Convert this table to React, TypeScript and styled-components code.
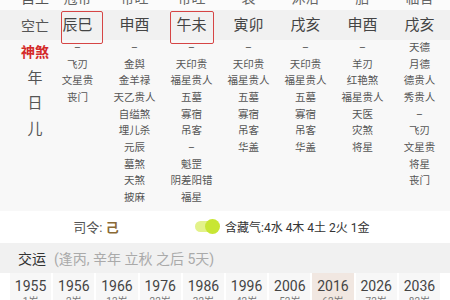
import React from 'react';
import styled, { createGlobalStyle } from 'styled-components';

const GlobalStyle = createGlobalStyle`
  html, body {
    margin: 0;
    padding: 0;
    background: #f8f8f8;
    overflow: hidden;
  }
  body {
    font-family: Roboto, "Noto Sans CJK SC", sans-serif;
    color: #555;
  }
`;

interface Pillar {
  name: string;
  top: string;
  boxed?: { left: number; width: number };
  stars: string[];
}

const pillars: Pillar[] = [
  { name: '辰巳', top: '冠带', boxed: { left: -17, width: 42 }, stars: ['–', '飞刃', '文星贵', '丧门'] },
  {
    name: '申酉',
    top: '帝旺',
    stars: ['–', '金舆', '金羊禄', '天乙贵人', '自缢煞', '埋儿杀', '元辰', '墓煞', '天煞', '披麻'],
  },
  {
    name: '午未',
    top: '帝旺',
    boxed: { left: -22, width: 44 },
    stars: ['–', '天印贵', '福星贵人', '五墓', '寡宿', '吊客', '–', '魁罡', '阴差阳错', '福星'],
  },
  { name: '寅卯', top: '衰', stars: ['–', '天印贵', '福星贵人', '五墓', '寡宿', '吊客', '华盖'] },
  { name: '戌亥', top: '沐浴', stars: ['–', '天印贵', '福星贵人', '五墓', '寡宿', '吊客', '华盖'] },
  { name: '申酉', top: '胎', stars: ['–', '羊刃', '红艳煞', '福星贵人', '天医', '灾煞', '将星'] },
  { name: '戌亥', top: '临官', stars: ['天德', '月德', '德贵人', '秀贵人', '–', '飞刃', '文星贵', '将星', '丧门'] },
];

const years = [
  { year: 1955, age: '1岁' },
  { year: 1956, age: '2岁' },
  { year: 1966, age: '12岁' },
  { year: 1976, age: '22岁' },
  { year: 1986, age: '32岁' },
  { year: 1996, age: '42岁' },
  { year: 2006, age: '52岁' },
  { year: 2016, age: '62岁', current: true },
  { year: 2026, age: '72岁' },
  { year: 2036, age: '82岁' },
];

const Page = styled.div`
  width: 450px;
  margin-top: -16px;
`;

const Row = styled.div<{ $bg: string; $height?: number }>`
  display: grid;
  grid-template-columns: 49px repeat(7, 57px);
  background: ${(p) => p.$bg};
  height: ${(p) => (p.$height ? `${p.$height}px` : 'auto')};
  align-items: center;
`;

const RowLabel = styled.div`
  padding-left: 21px;
  text-align: center;
  font-size: 14px;
  color: #555;
`;

const CutCell = styled.div`
  text-align: center;
  font-size: 14px;
  color: #666;
`;

const Branch = styled.div<{ $boxLeft?: number; $boxWidth?: number }>`
  position: relative;
  height: 30px;
  line-height: 30px;
  text-align: center;
  font-size: 15px;
  color: #444;

  ${(p) =>
    p.$boxWidth
      ? `
    &::after {
      content: '';
      position: absolute;
      top: 1px;
      left: calc(50% + ${p.$boxLeft}px);
      width: ${p.$boxWidth}px;
      height: 33px;
      box-sizing: border-box;
      border: 1.5px solid #d64545;
      border-radius: 2px;
    }
  `
      : ''}
`;

const StarsRow = styled.div`
  display: grid;
  grid-template-columns: 49px repeat(7, 57px);
  align-items: start;
  background: #f8f8f8;
  padding: 0 0 4px;
`;

const SideLabels = styled.div`
  display: flex;
  flex-direction: column;
  padding-left: 21px;
  align-items: center;
`;

const SideLabel = styled.span<{ $accent?: boolean }>`
  line-height: 25.5px;
  font-size: ${(p) => (p.$accent ? 14 : 15)}px;
  font-weight: ${(p) => (p.$accent ? 700 : 400)};
  color: ${(p) => (p.$accent ? '#d42a2a' : '#555')};
`;

const StarList = styled.div`
  display: flex;
  flex-direction: column;
  align-items: center;
`;

const Star = styled.span`
  font-size: 10.5px;
  line-height: 16.67px;
  color: #555;
  white-space: nowrap;
`;

const CommandBar = styled.div`
  display: flex;
  align-items: center;
  height: 32px;
  background: #fff;
`;

const Commander = styled.div`
  width: 192px;
  text-align: center;
  font-size: 13px;
  color: #555;

  b {
    color: #8a6a36;
    font-weight: 700;
  }
`;

const Switch = styled.span`
  position: relative;
  display: inline-block;
  width: 20px;
  height: 11px;
  margin-left: 3px;
  border-radius: 6px;
  background: #e3f28a;

  &::after {
    content: '';
    position: absolute;
    top: -2px;
    left: 10px;
    width: 15px;
    height: 15px;
    border-radius: 50%;
    background: #c8e634;
  }
`;

const Qi = styled.span`
  margin-left: 10px;
  font-size: 12px;
  color: #333;
`;

const LuckBar = styled.div`
  display: flex;
  align-items: center;
  height: 30px;
  padding-left: 18px;
  background: #f1f1f1;
  font-size: 14px;
  color: #333;
`;

const LuckNote = styled.span`
  margin-left: 8px;
  color: #aaa;
`;

const YearRow = styled.div`
  display: grid;
  grid-template-columns: repeat(10, 1fr);
  gap: 2px;
  padding: 0 10px;
  background: #fff;
  height: 28px;
  overflow: hidden;
`;

const YearCell = styled.div<{ $current?: boolean }>`
  display: flex;
  flex-direction: column;
  align-items: center;
  padding-top: 4px;
  background: ${(p) => (p.$current ? '#f1e7e1' : '#f7f7f7')};
`;

const YearNum = styled.span`
  font-size: 14px;
  line-height: 18px;
  color: #444;
`;

const Age = styled.span`
  font-size: 10px;
  line-height: 14px;
  color: #777;
`;

export default function App() {
  const lead = ['神煞', '年', '日', '儿'];

  return (
    <>
      <GlobalStyle />
      <Page>
        <Row $bg="#fbfbfb" $height={26}>
          <RowLabel>自坐</RowLabel>
          {pillars.map((p, i) => (
            <CutCell key={i}>{p.top}</CutCell>
          ))}
        </Row>

        <Row $bg="#f1f1f1" $height={30}>
          <RowLabel>空亡</RowLabel>
          {pillars.map((p, i) => (
            <Branch key={i} $boxLeft={p.boxed?.left} $boxWidth={p.boxed?.width}>
              {p.name}
            </Branch>
          ))}
        </Row>

        <StarsRow>
          <SideLabels>
            {lead.map((t, i) => (
              <SideLabel key={i} $accent={i === 0}>
                {t}
              </SideLabel>
            ))}
          </SideLabels>
          {pillars.map((p, i) => (
            <StarList key={i}>
              {p.stars.map((s, j) => (
                <Star key={j}>{s}</Star>
              ))}
            </StarList>
          ))}
        </StarsRow>

        <CommandBar>
          <Commander>
            司令: <b>己</b>
          </Commander>
          <Switch />
          <Qi>含藏气:4水 4木 4土 2火 1金</Qi>
        </CommandBar>

        <LuckBar>
          交运
          <LuckNote>(逢丙, 辛年 立秋 之后 5天)</LuckNote>
        </LuckBar>

        <YearRow>
          {years.map((y) => (
            <YearCell key={y.year} $current={y.current}>
              <YearNum>{y.year}</YearNum>
              <Age>{y.age}</Age>
            </YearCell>
          ))}
        </YearRow>
      </Page>
    </>
  );
}
